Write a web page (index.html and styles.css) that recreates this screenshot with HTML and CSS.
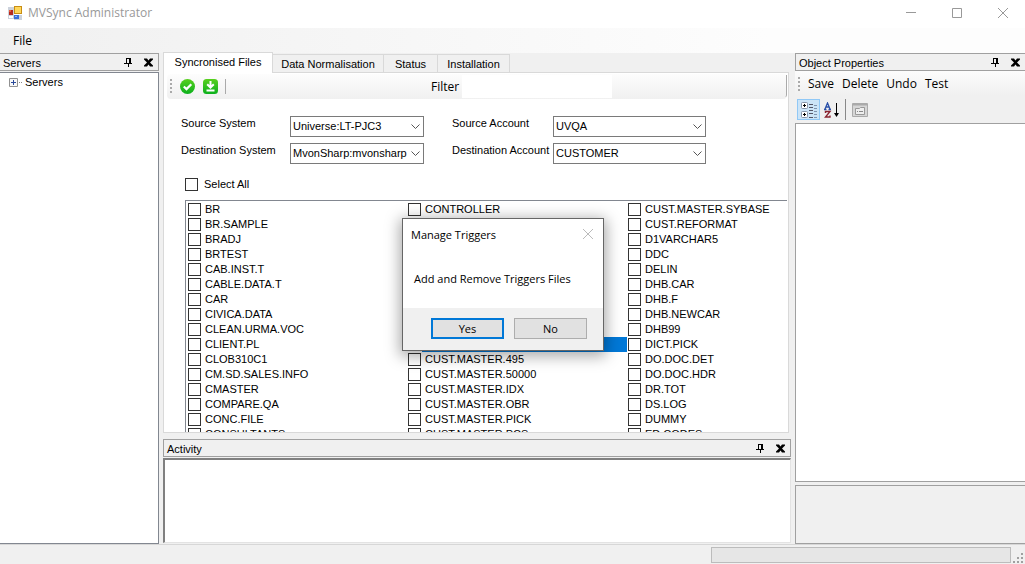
FILE: index.html
```html
<!DOCTYPE html>
<html lang="en">
<head>
<meta charset="utf-8">
<title>MVSync Administrator</title>
<link rel="stylesheet" href="styles.css">
</head>
<body>
<svg class="defs" aria-hidden="true">
  <symbol id="pin" viewBox="0 0 9 9"><path d="M2 .5h5M2.500 0v6M0 5.500h8M4.500 6v3" fill="none" stroke="#000"/><path d="M5 0h2v6H5z"/></symbol>
  <symbol id="cross" viewBox="0 0 9 8"><path d="M0 0h3l1.500 2L6 0h3v1L6 4l3 3v1H6L4.500 6 3 8H0V7l3-3-3-3z"/></symbol>
  <symbol id="chevron" viewBox="0 0 9 5"><path d="M.5 .5l4 4 4-4" fill="none" stroke="#555"/></symbol>
</svg>
<div class="window">
  <header class="titlebar">
    <svg class="app-icon" viewBox="0 0 14 14"><path fill="#ccd2dc" d="M0 1h6v12H0zM6 9h8v5H6z"/><path fill="#fff" d="M1 10h4v2H1z"/><path fill="#b52a20" d="M1 4h4v5H1z"/><path fill="#e85b3c" d="M1 4h2v2H1z"/><path fill="#c88d14" d="M6 0h8v8H6z"/><path fill="#ffd75a" d="M7 1h6v6H7z"/><path fill="#3a6fd8" d="M6 9h5v4H6z"/><path fill="#8db8f5" d="M7 10h2v1H7z"/></svg>
    <h1 class="app-title">MVSync Administrator</h1>
    <div class="window-buttons">
      <button aria-label="Minimize"><svg viewBox="0 0 10 10"><path d="M0 4.500h10"/></svg></button>
      <button aria-label="Maximize"><svg viewBox="0 0 10 10"><path d="M.5 .5h9v9h-9z"/></svg></button>
      <button aria-label="Close"><svg viewBox="0 0 10 10"><path d="M0 0l10 10M10 0L0 10"/></svg></button>
    </div>
  </header>
  <nav class="menubar"><button>File</button></nav>

  <main class="workspace">
    <section class="servers">
      <div class="pane-head"><h2>Servers</h2><button aria-label="Pin Servers"><svg><use href="#pin"/></svg></button><button aria-label="Close Servers"><svg><use href="#cross"/></svg></button></div>
      <div class="tree">
        <button class="tree-item"><svg viewBox="0 0 13 9"><path d="M.5 .5h8v8h-8z" fill="#f8f8f8" stroke="#919191"/><path d="M2 4.500h5M4.500 2v5" stroke="#2a4a9a"/><path d="M10 4.500h1M12 4.500h1" stroke="#888"/></svg>Servers</button>
      </div>
    </section>

    <section class="center">
      <div class="tabs" role="tablist">
        <button role="tab" class="tab active" aria-selected="true">Syncronised Files</button>
        <button role="tab" class="tab tab-data">Data Normalisation</button>
        <button role="tab" class="tab tab-status">Status</button>
        <button role="tab" class="tab tab-install">Installation</button>
      </div>
      <div class="tab-page">
        <div class="file-tools">
          <svg class="grip" viewBox="0 0 2 14"><path d="M1 0v14" stroke="#aaa" stroke-width="2" stroke-dasharray="2 2"/></svg>
          <button aria-label="Apply"><svg viewBox="0 0 15 15"><circle cx="7.500" cy="7.500" r="7.500" fill="url(#green)"/><path d="M3.800 7.500l2.700 2.600 4.800-4.800" fill="none" stroke="#fff" stroke-width="2.200"/><defs><linearGradient id="green" x2="0" y2="1"><stop stop-color="#58d01e"/><stop offset="1" stop-color="#0bb01d"/></linearGradient></defs></svg></button>
          <button aria-label="Download"><svg viewBox="0 0 15 15"><rect width="15" height="15" rx="3.500" fill="url(#green)"/><path d="M7.500 2v6M4.200 5.200l3.300 3.300 3.300-3.300M3.500 11.500h8" fill="none" stroke="#fff" stroke-width="2"/></svg></button>
          <span class="divider"></span>
          <label class="filter" for="filter">Filter</label>
          <input id="filter" type="text">
          <span class="overflow"></span>
        </div>
        <div class="form">
          <label for="ss">Source System</label>
          <div class="combo"><select id="ss"><option>Universe:LT-PJC3</option></select><svg><use href="#chevron"/></svg></div>
          <label for="sa">Source Account</label>
          <div class="combo"><select id="sa"><option>UVQA</option></select><svg><use href="#chevron"/></svg></div>
          <label for="ds">Destination System</label>
          <div class="combo"><select id="ds"><option>MvonSharp:mvonsharp</option></select><svg><use href="#chevron"/></svg></div>
          <label for="da">Destination Account</label>
          <div class="combo"><select id="da"><option>CUSTOMER</option></select><svg><use href="#chevron"/></svg></div>
        </div>
        <label class="check select-all"><input type="checkbox">Select All</label>
        <div class="file-list">
          <label class="check"><input type="checkbox">BR</label>
          <label class="check"><input type="checkbox">BR.SAMPLE</label>
          <label class="check"><input type="checkbox">BRADJ</label>
          <label class="check"><input type="checkbox">BRTEST</label>
          <label class="check"><input type="checkbox">CAB.INST.T</label>
          <label class="check"><input type="checkbox">CABLE.DATA.T</label>
          <label class="check"><input type="checkbox">CAR</label>
          <label class="check"><input type="checkbox">CIVICA.DATA</label>
          <label class="check"><input type="checkbox">CLEAN.URMA.VOC</label>
          <label class="check"><input type="checkbox">CLIENT.PL</label>
          <label class="check"><input type="checkbox">CLOB310C1</label>
          <label class="check"><input type="checkbox">CM.SD.SALES.INFO</label>
          <label class="check"><input type="checkbox">CMASTER</label>
          <label class="check"><input type="checkbox">COMPARE.QA</label>
          <label class="check"><input type="checkbox">CONC.FILE</label>
          <label class="check"><input type="checkbox">CONSULTANTS</label>
          <label class="check"><input type="checkbox">CONTROLLER</label>
          <label class="check"><input type="checkbox"></label>
          <label class="check"><input type="checkbox"></label>
          <label class="check"><input type="checkbox"></label>
          <label class="check"><input type="checkbox"></label>
          <label class="check"><input type="checkbox"></label>
          <label class="check"><input type="checkbox"></label>
          <label class="check"><input type="checkbox"></label>
          <label class="check"><input type="checkbox"></label>
          <label class="check selected"><input type="checkbox"><span></span></label>
          <label class="check"><input type="checkbox">CUST.MASTER.495</label>
          <label class="check"><input type="checkbox">CUST.MASTER.50000</label>
          <label class="check"><input type="checkbox">CUST.MASTER.IDX</label>
          <label class="check"><input type="checkbox">CUST.MASTER.OBR</label>
          <label class="check"><input type="checkbox">CUST.MASTER.PICK</label>
          <label class="check"><input type="checkbox">CUST.MASTER.PCS</label>
          <label class="check"><input type="checkbox">CUST.MASTER.SYBASE</label>
          <label class="check"><input type="checkbox">CUST.REFORMAT</label>
          <label class="check"><input type="checkbox">D1VARCHAR5</label>
          <label class="check"><input type="checkbox">DDC</label>
          <label class="check"><input type="checkbox">DELIN</label>
          <label class="check"><input type="checkbox">DHB.CAR</label>
          <label class="check"><input type="checkbox">DHB.F</label>
          <label class="check"><input type="checkbox">DHB.NEWCAR</label>
          <label class="check"><input type="checkbox">DHB99</label>
          <label class="check"><input type="checkbox">DICT.PICK</label>
          <label class="check"><input type="checkbox">DO.DOC.DET</label>
          <label class="check"><input type="checkbox">DO.DOC.HDR</label>
          <label class="check"><input type="checkbox">DR.TOT</label>
          <label class="check"><input type="checkbox">DS.LOG</label>
          <label class="check"><input type="checkbox">DUMMY</label>
          <label class="check"><input type="checkbox">ED.CODES</label>
        </div>
      </div>
      <div class="pane-head activity-head"><h2>Activity</h2><button aria-label="Pin Activity"><svg><use href="#pin"/></svg></button><button aria-label="Close Activity"><svg><use href="#cross"/></svg></button></div>
      <div class="activity-log"></div>
    </section>

    <section class="properties">
      <div class="pane-head"><h2>Object Properties</h2><button aria-label="Pin Object Properties"><svg><use href="#pin"/></svg></button><button aria-label="Close Object Properties"><svg><use href="#cross"/></svg></button></div>
      <div class="commands">
        <svg class="grip" viewBox="0 0 2 14"><path d="M1 0v14" stroke="#aaa" stroke-width="2" stroke-dasharray="2 2"/></svg>
        <button>Save</button><button>Delete</button><button>Undo</button><button>Test</button>
      </div>
      <div class="grid-tools">
        <button class="pressed" aria-label="Categorized"><svg viewBox="0 0 16 16"><g fill="#fff" stroke="#8794a8"><rect x=".5" y=".5" width="6" height="6" rx="1"/><rect x=".5" y="9.500" width="6" height="6" rx="1"/></g><path d="M2 3.500h3M3.500 2v3M2 12.500h3M3.500 11v3" stroke="#000"/><path d="M8 2.500h4M8 5.500h4M8 8.500h4M8 11.500h4M8 15.500h4" stroke="#556"/><path d="M13 3.500h3M13 6.500h3M13 9.500h3M13 12.500h3M13 15.500h3" stroke="#7f93ad"/></svg></button>
        <button aria-label="Alphabetical"><svg viewBox="0 0 16 16"><path d="M1 7l2.500-6L6 7M2 5h3M0 7.500h2.500M4.500 7.500H7" fill="none" stroke="#2b50a8" stroke-width="1.300"/><path d="M1.500 11V9.500H6L1.500 15H6v-1.500" fill="none" stroke="#8b2530" stroke-width="1.400"/><path d="M12.500 1v11" stroke="#000"/><path d="M10 11h5l-2.500 4z"/></svg></button>
        <span class="divider"></span>
        <button aria-label="Property Pages" disabled><svg viewBox="0 0 16 16"><path d="M.5 1.500h15v13H.5z" fill="#d6d6d6" stroke="#aaa"/><path d="M1 2.500h14" stroke="#aaa" stroke-width="2"/><path d="M3.500 6.500h4l1-1h4v7h-9z" fill="#eee" stroke="#999"/><path d="M5 9.500h1M7 9.500h4" stroke="#888"/></svg></button>
      </div>
      <div class="property-grid"></div>
      <div class="property-help"></div>
    </section>
  </main>

  <footer class="statusbar">
    <div class="progress" role="progressbar" aria-label="Progress"></div>
    <svg class="sizer" viewBox="0 0 10 10"><path fill="#a0a0a0" d="M8 0h2v2H8zM4 4h2v2H4zM8 4h2v2H8zM0 8h2v2H0zM4 8h2v2H4zM8 8h2v2H8z"/></svg>
  </footer>

  <div class="dialog" role="dialog" aria-labelledby="dlg-title">
    <div class="dialog-head"><h2 id="dlg-title">Manage Triggers</h2><button aria-label="Close dialog"><svg viewBox="0 0 10 10"><path d="M0 0l10 10M10 0L0 10" stroke="#bbb"/></svg></button></div>
    <p>Add and Remove Triggers Files</p>
    <div class="dialog-actions"><button class="default">Yes</button><button>No</button></div>
  </div>
</div>
</body>
</html>
```

FILE: styles.css
```css
* { box-sizing: border-box; }
html, body { height: 100%; margin: 0; }
body { font: 11px/15px "Liberation Sans", Arial, sans-serif; color: #000; background: #f0f0f0; overflow: hidden; }
button { font: inherit; color: inherit; background: none; border: 0; padding: 0; margin: 0; }
h1, h2, p { font-size: inherit; font-weight: normal; margin: 0; }
svg { display: block; flex: none; }
.defs { position: absolute; width: 0; height: 0; }
.window { position: relative; height: 100vh; display: flex; flex-direction: column; }
.titlebar, .menubar, .file-tools, .commands { font-family: "Open Sans", sans-serif; font-size: 12px; }

.titlebar { flex: none; height: 28px; display: flex; align-items: center; padding: 0 17px 3px 8px; background: #fff; }
.app-icon { width: 14px; height: 14px; }
.app-title { flex: 1; padding: 0 0 0 6px; color: #999; }
.window-buttons { display: flex; gap: 36px; }
.window-buttons svg { width: 10px; height: 10px; fill: none; stroke: #999; }
.menubar { flex: none; height: 25px; padding: 0 13px 1px; display: flex; align-items: center; background: linear-gradient(90deg, #f0f0f0, #fdfdfd 75%); }

.workspace { flex: 1; min-height: 0; display: grid; grid-template-columns: 159px minmax(0, 1fr) 230px; gap: 4px; }
.workspace > section { min-height: 0; min-width: 0; display: flex; flex-direction: column; }
.pane-head { flex: none; height: 18px; display: flex; align-items: center; gap: 11px; padding: 1px 5px 0 3px; border: 1px solid #a0a0a0; }
.pane-head h2 { flex: 1; padding-top: 1px; }
.pane-head svg { width: 9px; height: 9px; }
.servers .pane-head { border-left: 0; }
.tree { flex: 1; margin-top: 1px; padding: 2px 0 0 9px; background: #fff; border: 1px solid #828790; border-left: 0; }
.tree-item { display: flex; align-items: center; gap: 3px; }
.tree-item svg { width: 13px; height: 9px; }

.tabs { flex: none; display: flex; align-items: flex-end; height: 19px; }
.tab { height: 18px; border: 1px solid #d9d9d9; border-left: 0; border-bottom: 0; padding-top: 1px; }
.tab.active { flex: none; align-self: flex-start; width: 110px; height: 21px; margin-top: -1px; padding: 0 0 2px; z-index: 1; background: #fff; border-left: 1px solid #d9d9d9; }
.tab-data { width: 111px; }
.tab-status { width: 54px; }
.tab-install { width: 72px; }
.tab-page { flex: 1; min-height: 0; margin-right: 2px; padding: 1px 1px 0 3px; display: flex; flex-direction: column; background: #fff; border: 1px solid #d9d9d9; }
.file-tools { flex: none; height: 25px; display: flex; align-items: center; padding: 0 0 1px 3px; background: linear-gradient(#fdfdfd, #f0f0f0); border-radius: 4px; }
.grip { width: 2px; height: 14px; }
.file-tools button { margin-left: 8px; }
.file-tools svg:not(.grip) { width: 15px; height: 15px; }
.divider { width: 1px; height: 15px; margin-left: 7px; background: #aaa; }
.filter { margin-left: 205px; }
.file-tools input { width: 150px; height: 23px; margin-left: 3px; border: 0; background: #fff; }
.overflow { width: 2px; height: 22px; margin-left: auto; border-right: 1px solid #aaa; border-radius: 0 0 3px 0; }
.form { flex: none; display: grid; grid-template-columns: 109px 162px 101px 153px; row-gap: 6px; padding: 17px 0 0 14px; }
.form label { white-space: nowrap; }
.form .combo:nth-of-type(odd) { margin-right: 28px; }
.combo { display: grid; align-items: center; }
.combo > * { grid-area: 1 / 1; }
.combo select { appearance: none; width: 100%; height: 21px; padding: 0 16px 1px 2px; border: 1px solid #7a7a7a; border-radius: 0; background: #fff; font: inherit; color: #000; }
.combo svg { justify-self: end; width: 9px; height: 5px; margin-right: 4px; pointer-events: none; }
.check { display: flex; align-items: center; gap: 4px; white-space: nowrap; }
.check input { appearance: none; flex: none; width: 13px; height: 13px; margin: 0; border: 1px solid #333; background: #fff; }
.select-all { margin: 13px 0 8px 18px; gap: 6px; }
.file-list { flex: 1; min-height: 0; margin-left: 18px; padding: 1px 0 0 2px; display: grid; grid-auto-flow: column; grid-template-rows: repeat(16, 15px); grid-auto-columns: 220px; overflow: hidden; border: 1px solid #828790; border-width: 1px 0 0 1px; }
.selected { gap: 1px; padding-right: 1px; }
.selected span { flex: 1; height: 15px; background: #0078d7; }
.activity-head { margin: 6px 0 1px; }
.activity-log { flex: none; height: 85px; margin-bottom: 1px; background: #fff; border: 2px solid #808080; border-color: #808080 #e3e3e3 #e3e3e3 #808080; border-right-width: 1px; border-bottom-width: 1px; }

.properties .pane-head { border-right: 0; }
.commands { flex: none; height: 25px; display: flex; align-items: center; gap: 8px; padding-left: 3px; background: linear-gradient(#fcfcfc, #f0f0f0); }
.grid-tools { flex: none; height: 27px; display: flex; align-items: center; padding: 0 2px; }
.grid-tools button { width: 23px; height: 21px; display: grid; place-items: center; }
.grid-tools svg { width: 16px; height: 16px; }
.grid-tools .pressed { background: #cce4f7; border: 1px solid #90c8f6; }
.grid-tools .divider { height: 21px; margin: 0 2px; background: #888; }
.property-grid { flex: 1; background: #fff; border: 1px solid #a0a0a0; border-right: 0; }
.property-help { flex: none; height: 59px; margin-top: 3px; border: 1px solid #a0a0a0; border-right: 0; }

.statusbar { flex: none; height: 20px; display: flex; justify-content: flex-end; align-items: flex-end; gap: 2px; padding: 0 2px 1px 0; border-top: 1px solid #d7d7d7; }
.progress { width: 300px; height: 16px; background: #e6e6e6; border: 1px solid #bcbcbc; }
.sizer { width: 10px; height: 10px; }

.dialog { position: absolute; left: 402px; top: 218px; width: 202px; display: flex; flex-direction: column; background: #fff; border: 1px solid #666; box-shadow: 0 3px 14px 2px rgba(0, 0, 0, .35); font-family: "Open Sans", sans-serif; }
.dialog-head { display: flex; justify-content: space-between; align-items: center; height: 30px; padding: 0 10px 0 8px; }
.dialog-head svg { width: 10px; height: 10px; }
.dialog p { height: 59px; padding: 22px 0 0 11px; white-space: nowrap; }
.dialog-actions { display: flex; justify-content: flex-end; gap: 10px; padding: 10px 16px 11px; background: #f0f0f0; }
.dialog-actions button { width: 73px; height: 21px; background: #e1e1e1; border: 1px solid #adadad; }
.dialog-actions .default { border: 2px solid #0078d7; }
```
